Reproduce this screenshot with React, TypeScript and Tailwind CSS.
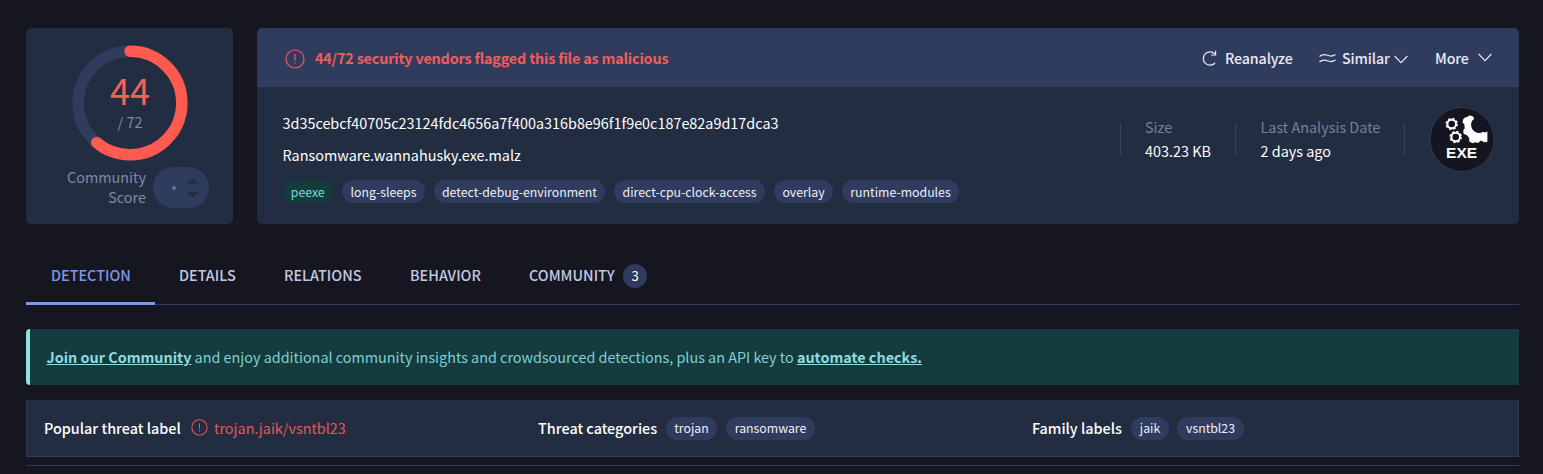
import React from "react";

const Alert = ({ className }: { className: string }) => (
  <svg className={className} viewBox="0 0 20 20" fill="none" stroke="currentColor" strokeWidth="1.2">
    <circle cx="10" cy="10" r="9" />
    <path d="M10 5v6.6" />
    <path d="M10 13.2v1.6" />
  </svg>
);

const Chevron = ({ className }: { className: string }) => (
  <svg className={className} viewBox="0 0 14 9" fill="none" stroke="currentColor" strokeWidth="1.1">
    <path d="M.6 1l6.4 6.6L13.4 1" />
  </svg>
);

const Chip = ({ width, green, children }: { width: string; green?: boolean; children: string }) => (
  <span
    className={`flex h-[23px] shrink-0 items-center justify-center rounded-full pt-px text-[12.3px] whitespace-nowrap ${width} ${
      green ? "bg-[#143c3d] text-[#7bd8d2]" : "bg-[#303c5d] text-[#eef0fa]"
    }`}
  >
    {children}
  </span>
);

const Divider = ({ className }: { className: string }) => (
  <div className={`h-8 w-px bg-[#36425f] ${className}`} />
);

function ScoreCard() {
  return (
    <section className="flex h-[196px] w-[207px] shrink-0 flex-col rounded-[5px] bg-[#232d41] pt-[16.5px]">
      <div className="ml-[46px] grid size-[116px]">
        <svg className="col-start-1 row-start-1 size-[116px]" viewBox="0 0 116 116" fill="none" strokeWidth="11.5">
          <circle cx="58" cy="58" r="51.8" stroke="#303c5b" />
          <circle
            cx="58"
            cy="58"
            r="51.8"
            stroke="#ff5a50"
            strokeLinecap="round"
            pathLength="72"
            strokeDasharray="44 28"
            transform="rotate(-90 58 58)"
          />
        </svg>
        <div className="col-start-1 row-start-1 flex flex-col items-center pt-[24px]">
          <div className="text-[36px] leading-[40px] text-[#f8605a]">44</div>
          <div className="mt-[3px] text-[14.4px] leading-[20px] text-[#8089a5]">/ 72</div>
        </div>
      </div>
      <div className="flex pt-[6.5px] pl-[30px]">
        <div className="w-[90px] text-right text-[14.4px] leading-[20px] text-[#8089a5]">
          Community
          <br />
          Score
        </div>
        <div className="ml-[7px] flex h-[41px] w-[56px] items-center justify-end rounded-full bg-[#303c5d] pr-2.5">
          <span className="mr-[11px] size-1 rounded-full bg-[#6b7594]" />
          <svg className="h-5 w-3" viewBox="0 0 12 20" fill="#232d41">
            <path d="M6 0l6 5.5H0zM0 14h12l-6 5.5z" />
          </svg>
        </div>
      </div>
    </section>
  );
}

const ExeIcon = () => (
  <svg className="mt-[20px] ml-[24px] size-[66px] shrink-0" viewBox="0 0 66 66">
    <circle cx="33" cy="32.5" r="32" fill="#151521" stroke="#303851" />
    <g fill="none" stroke="#fff">
      <circle cx="22.7" cy="17" r="4.300" strokeWidth="2" />
      <circle cx="22.7" cy="17" r="5.600" strokeWidth="1.300" strokeDasharray="2.400 2" />
      <circle cx="26.700" cy="30" r="4.300" strokeWidth="2" />
      <circle cx="26.700" cy="30" r="5.600" strokeWidth="1.300" strokeDasharray="2.400 2" />
    </g>
    <path
      fill="#fff"
      d="M36 10.500L38.800 9.800 40 8.600 43.500 9 45.300 11.800C42.500 13.500 41.700 16.500 42.300 19.500 43.200 23.500 46.500 26 50.500 26 51.800 26 53 25.600 54 24.800L56 25.500 58.400 24.500V34.800L55.500 35.200 51.500 33.600 49.300 35.900 46.500 35.200 43.500 36.300 40.300 34.500 40.200 31 38 28.300 34.600 26.800 34.200 23.500 35.700 21.500 35.400 17.500 33.600 15.500 34 12.500Z"
    />
    <text x="32.600" y="51.3" textAnchor="middle" fill="#fff" fontFamily="Liberation Sans, sans-serif" fontWeight="700" fontSize="15.500">
      EXE
    </text>
  </svg>
);

function FileCard() {
  return (
    <section className="h-[196px] w-[1262px] overflow-hidden rounded-[5px] bg-[#232d41]">
      <header className="flex h-[59px] items-center bg-[#303c5d] pt-[2px] pl-7 font-medium">
        <Alert className="size-[20px] text-[#e85c5c]" />
        <span className="mb-px ml-[10px] w-[400px] text-[14.4px] font-semibold tracking-[-0.19px] whitespace-nowrap text-[#f05c5c]">
          44/72 security vendors flagged this file as malicious
        </span>
        <div className="ml-auto flex items-center text-[14.2px] whitespace-nowrap text-[#e8ebf7]">
          <svg className="h-[16px] w-[15px]" viewBox="0 0 15 16" fill="none" stroke="currentColor" strokeWidth="1.2">
            <path d="M13 13A6.700 6.700 0 1 1 12.800 3.800M13.600 .8v4.200H9.300" />
          </svg>
          <span className="ml-2 w-[68px] tracking-[-0.1px]">Reanalyze</span>
          <svg className="ml-[26px] h-[11px] w-[17px]" viewBox="0 0 17 11" fill="none" stroke="currentColor" strokeWidth="1.200">
            <path d="M.5 3.500C3.500 .8 5.500 1 8.500 2.300S13.500 3.500 16.500 1.600M.5 9C3.500 6.300 5.500 6.500 8.500 7.800S13.500 9 16.500 7.100" />
          </svg>
          <span className="ml-1.5 w-[48px] tracking-[-0.1px]">Similar</span>
          <Chevron className="mt-[2px] ml-1 h-[9px] w-[14px]" />
          <span className="ml-[27px] w-[35px] tracking-[-0.1px]">More</span>
          <Chevron className="mr-[27px] mb-[2px] ml-2 h-[9px] w-[14px]" />
        </div>
      </header>
      <div className="flex">
        <div className="w-[863px] pl-[25.500px] text-[14.4px] whitespace-nowrap text-white">
          <div className="pt-[26px] leading-[20px]">3d35cebcf40705c23124fdc4656a7f400a316b8e96f1f9e0c187e82a9d17dca3</div>
          <div className="pt-[12px] leading-[20px]">Ransomware.wannahusky.exe.malz</div>
          <div className="flex gap-[9px] pt-[15px]">
            <Chip green width="w-[50.5px]">peexe</Chip>
            <Chip width="w-[83px]">long-sleeps</Chip>
            <Chip width="w-[171px]">detect-debug-environment</Chip>
            <Chip width="w-[151px]">direct-cpu-clock-access</Chip>
            <Chip width="w-[59px]">overlay</Chip>
            <Chip width="w-[117px]">runtime-modules</Chip>
          </div>
        </div>
        <Divider className="mt-9" />
        <div className="w-[114px] pt-[28px] pl-6 text-[14.4px] leading-[24px] whitespace-nowrap text-white">
          <div className="text-[#76809c]">Size</div>
          <div>403.23 KB</div>
        </div>
        <Divider className="mt-9" />
        <div className="w-[168px] pt-[28px] pl-[24.5px] text-[14.4px] leading-[24px] whitespace-nowrap text-white">
          <div className="text-[#76809c]">Last Analysis Date</div>
          <div>2 days ago</div>
        </div>
        <Divider className="mt-9" />
        <ExeIcon />
      </div>
    </section>
  );
}

export default function App() {
  return (
    <main className="h-[474px] w-[1543px] overflow-hidden bg-[#161621] pt-7 pl-[26px] font-['Noto_Sans_CJK_SC','Noto_Sans',sans-serif]">
      <div className="flex gap-6">
        <ScoreCard />
        <FileCard />
      </div>
      <nav className="mt-6 flex h-[57px] w-[1493px] border-b border-[#303c5b] text-[14.4px] font-medium whitespace-nowrap text-[#c3c9e4]">
        <div className="h-[57px] w-[129px] border-b-[3px] border-[#7c98e8] pl-[25px] leading-[54px] text-[#7c98e8]">DETECTION</div>
        <div className="w-[105px] pl-6 leading-[54px]">DETAILS</div>
        <div className="w-[126px] pl-6 leading-[54px]">RELATIONS</div>
        <div className="w-[119px] pl-6 leading-[54px]">BEHAVIOR</div>
        <div className="flex items-start pl-6">
          <span className="w-[94px] leading-[54px]">COMMUNITY</span>
          <span className="mt-4 flex size-6 items-center justify-center rounded-full bg-[#303c5d] text-[13px] font-normal text-white">3</span>
        </div>
      </nav>
      <div className="mt-6 h-14 w-[1493px] rounded-l-[4px] border-l-4 border-[#8ee0e3] bg-[#153b3e] pl-[16.500px] text-[14.39px] leading-[56px] whitespace-nowrap text-[#7fd0d3]">
        <a className="font-bold text-[#8edce0] underline">Join our Community</a> and enjoy additional community insights and crowdsourced
        detections, plus an API key to <a className="font-bold text-[#8edce0] underline">automate checks.</a>
      </div>
      <div className="mt-[15px] flex h-[57px] w-[1493px] items-center border-x border-b border-[#303c5b] bg-[#232d41] pl-[17px] text-[14.4px] whitespace-nowrap text-white">
        <div className="flex w-[494px] items-center">
          <span className="w-[138px] font-medium">Popular threat label</span>
          <Alert className="ml-[9px] size-[17px] text-[#e85656]" />
          <span className="ml-[6px] text-[#e85656]">trojan.jaik/vsntbl23</span>
        </div>
        <div className="flex w-[494px] items-center">
          <span className="w-[128px] font-medium">Threat categories</span>
          <Chip width="w-[51px]">trojan</Chip>
          <span className="w-[9px]" />
          <Chip width="w-[89px]">ransomware</Chip>
        </div>
        <div className="flex items-center gap-2">
          <span className="w-[91px] font-medium">Family labels</span>
          <Chip width="w-[38px]">jaik</Chip>
          <Chip width="w-[67px]">vsntbl23</Chip>
        </div>
      </div>
      <div className="mt-2 h-px w-[1493px] bg-[#303c5b]" />
    </main>
  );
}
